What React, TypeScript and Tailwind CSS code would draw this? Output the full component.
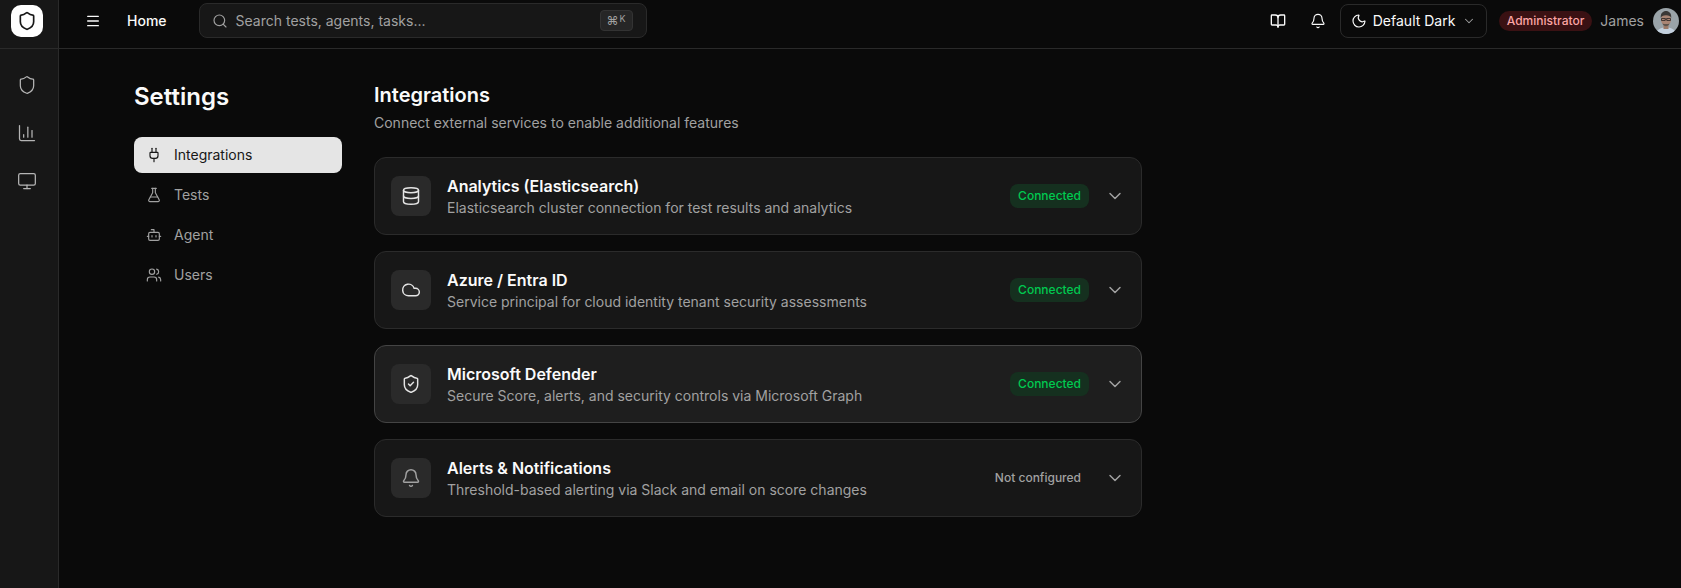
import {
  Bell,
  Bot,
  BookOpen,
  ChartColumn,
  ChevronDown,
  Cloud,
  Database,
  FlaskConical,
  Menu,
  Monitor,
  Moon,
  Plug,
  Search,
  Shield,
  ShieldCheck,
  Users,
} from "lucide-react";
import type { ComponentType } from "react";

type IconType = ComponentType<{ className?: string; strokeWidth?: number }>;

const settingsNav: { label: string; icon: IconType; active?: boolean }[] = [
  { label: "Integrations", icon: Plug, active: true },
  { label: "Tests", icon: FlaskConical },
  { label: "Agent", icon: Bot },
  { label: "Users", icon: Users },
];

const integrations: {
  title: string;
  description: string;
  icon: IconType;
  connected: boolean;
  hovered?: boolean;
}[] = [
  {
    title: "Analytics (Elasticsearch)",
    description: "Elasticsearch cluster connection for test results and analytics",
    icon: Database,
    connected: true,
  },
  {
    title: "Azure / Entra ID",
    description: "Service principal for cloud identity tenant security assessments",
    icon: Cloud,
    connected: true,
  },
  {
    title: "Microsoft Defender",
    description: "Secure Score, alerts, and security controls via Microsoft Graph",
    icon: ShieldCheck,
    connected: true,
    hovered: true,
  },
  {
    title: "Alerts & Notifications",
    description: "Threshold-based alerting via Slack and email on score changes",
    icon: Bell,
    connected: false,
  },
];

function Avatar() {
  return (
    <svg viewBox="0 0 26 26" className="size-[26px] shrink-0 rounded-full">
      <rect width="26" height="26" fill="#9aa3a8" />
      <path d="M3 26c1-5 5-6.500 10-6.500S22 21 23 26z" fill="#c3d0de" />
      <rect x="10.500" y="15" width="5" height="6" fill="#9c7a68" />
      <ellipse cx="13" cy="11.500" rx="5" ry="6.500" fill="#a98574" />
      <path d="M7.800 10c-.5-5 2.400-7 5.200-7s5.700 2 5.200 7c-.8-2-2-2.800-5.200-2.800S8.600 8 7.800 10z" fill="#3a3836" />
      <path d="M8.500 10.500h3.700v2H8.500zM13.800 10.500h3.700v2h-3.700zM12.200 11h1.600" fill="none" stroke="#2b2523" strokeWidth=".8" />
      <path d="M9.500 15.500c1 3.500 6 3.500 7 0-1 .8-6 .8-7 0z" fill="#5e554e" />
    </svg>
  );
}

function IntegrationCard({ item }: { item: (typeof integrations)[number] }) {
  const Icon = item.icon;
  return (
    <div
      className={
        item.hovered
          ? "flex items-center rounded-xl border border-[#444444] bg-[#1e1e1e] p-4"
          : "flex items-center rounded-xl border border-[#2b2b2b] bg-[#171717] p-4"
      }
    >
      <div className="flex size-10 shrink-0 items-center justify-center rounded-lg bg-[#2a2a2a]">
        <Icon
          className={item.connected ? "size-5 text-[#e5e5e5]" : "size-5 text-[#a1a1a1]"}
          strokeWidth={1.75}
        />
      </div>
      <div className="ml-4 min-w-0 flex-1">
        <div className="text-base font-semibold text-[#fafafa]">{item.title}</div>
        <div className="text-sm text-[#a1a1a1]">{item.description}</div>
      </div>
      {item.connected ? (
        <span className="rounded-lg bg-[#15301f] px-2 py-1 text-xs font-medium text-[#00c950]">Connected</span>
      ) : (
        <span className="rounded-lg px-2 py-1 text-xs font-medium text-[#a1a1a1]">Not configured</span>
      )}
      <ChevronDown className="ml-4 size-5 text-[#a1a1a1]" strokeWidth={1.75} />
    </div>
  );
}

export default function App() {
  return (
    <div className="flex h-screen overflow-hidden bg-[#0a0a0a] font-['Inter',sans-serif] text-[#fafafa]">
      {/* Icon rail */}
      <aside className="flex w-[59px] shrink-0 flex-col border-r border-[#2a2a2a] bg-[#171717]">
        <div className="flex h-[49px] shrink-0 items-center border-b border-[#2a2a2a] pb-[6px] pl-[11px]">
          <div className="flex size-8 items-center justify-center rounded-[10px] bg-white">
            <Shield className="size-5 text-[#171717]" strokeWidth={2} />
          </div>
        </div>
        <nav className="flex flex-col gap-7 pt-[26px] pl-[17px] text-[#b5b5b5]">
          <Shield className="size-5" strokeWidth={1.5} />
          <ChartColumn className="size-5" strokeWidth={1.5} />
          <Monitor className="size-5" strokeWidth={1.5} />
        </nav>
      </aside>

      <div className="flex min-w-0 flex-1 flex-col">
        {/* Top bar */}
        <header className="flex h-[49px] shrink-0 items-center border-b border-[#2a2a2a] pr-[2px] pb-[7px] pl-[26px]">
          <Menu className="size-4 text-[#fafafa]" />
          <span className="ml-[26px] text-sm font-medium">Home</span>
          <div className="ml-[32px] flex h-[35px] w-[448px] items-center rounded-lg border border-[#2a2a2a] bg-[#171717] pr-[13px] pl-[12px]">
            <Search className="size-4 text-[#a1a1a1]" strokeWidth={1.75} />
            <span className="ml-2 flex-1 text-sm text-[#a1a1a1]">Search tests, agents, tasks...</span>
            <kbd className="flex h-[21px] w-[33px] items-start justify-center rounded border border-[#333333] bg-[#262626] pt-[2px] font-['Inter',sans-serif] text-[#a1a1a1]">
              <span className="text-[12px] leading-[16px]">⌘</span>
              <span className="ml-[1px] text-[9px] leading-[11px]">K</span>
            </kbd>
          </div>
          <div className="ml-auto flex items-center">
            <BookOpen className="size-4" strokeWidth={2} />
            <Bell className="ml-6 size-4" strokeWidth={1.75} />
            <div className="ml-[14px] flex h-[34px] w-[147px] shrink-0 items-center rounded-lg border border-[#2a2a2a] pr-[10px] pl-[10px]">
              <Moon className="size-4" strokeWidth={1.75} />
              <span className="ml-[6px] text-sm whitespace-nowrap">Default Dark</span>
              <ChevronDown className="ml-auto size-3.5 text-[#a1a1a1]" strokeWidth={1.75} />
            </div>
            <span className="ml-3 rounded-full bg-[#3a1113] px-2 py-0.5 text-xs font-medium text-[#fca5a5]">Administrator</span>
            <span className="ml-[8px] text-sm text-[#a1a1a1]">James</span>
            <div className="ml-[9px]">
              <Avatar />
            </div>
          </div>
        </header>

        {/* Settings */}
        <main className="flex flex-1 pt-8 pl-[75px]">
          <div className="w-[208px] shrink-0">
            <h1 className="text-2xl font-semibold">Settings</h1>
            <nav className="mt-6 flex flex-col gap-1">
              {settingsNav.map(({ label, icon: Icon, active }) => (
                <div
                  key={label}
                  className={
                    active
                      ? "flex h-9 items-center gap-3 rounded-lg bg-[#e5e5e5] px-3 text-sm text-[#171717]"
                      : "flex h-9 items-center gap-3 rounded-lg px-3 text-sm text-[#a1a1a1]"
                  }
                >
                  <Icon className="size-4" strokeWidth={1.75} />
                  {label}
                </div>
              ))}
            </nav>
          </div>
          <div className="ml-8 w-[768px] shrink-0">
            <h2 className="text-xl font-semibold">Integrations</h2>
            <p className="mt-1 text-sm text-[#a1a1a1]">Connect external services to enable additional features</p>
            <div className="mt-6 flex flex-col gap-4">
              {integrations.map((item) => (
                <IntegrationCard key={item.title} item={item} />
              ))}
            </div>
          </div>
        </main>
      </div>
    </div>
  );
}
